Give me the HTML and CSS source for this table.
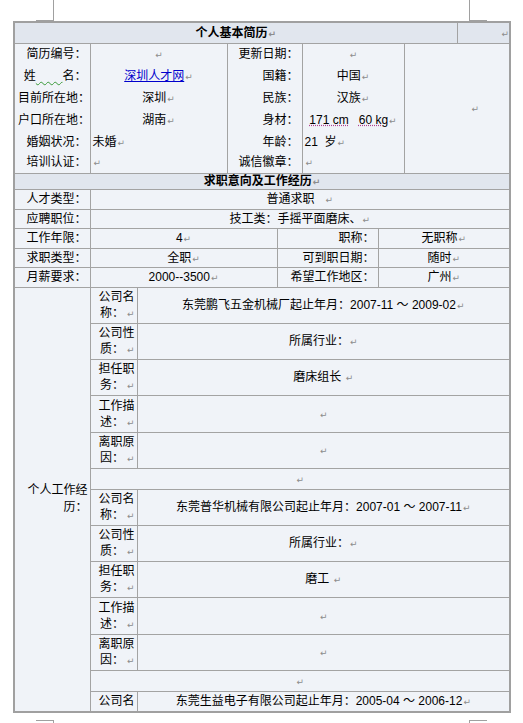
FILE: index.html
```html
<!DOCTYPE html>
<html lang="zh-CN">
<head>
<meta charset="utf-8">
<title>个人基本简历</title>
<link rel="stylesheet" href="styles.css">
</head>
<body>
<div class="page">
  <div class="marks top"><span class="mk mk-l"></span><span class="mk mk-r"></span></div>
  <table class="resume">
    <colgroup>
      <col class="c1"><col class="c2"><col class="c3"><col class="c4"><col class="c5"><col class="c6"><col class="c7"><col class="c8"><col class="c9">
    </colgroup>
    <tr class="hd1">
      <td colspan="8" class="title">个人基本简历<i class="p">↵</i></td>
      <td class="title-side"><i class="p">↵</i></td>
    </tr>
    <tr class="info i1">
      <td class="lb">简历编号：</td>
      <td colspan="2" class="ctr"><i class="p">↵</i></td>
      <td colspan="2" class="lb">更新日期：</td>
      <td colspan="2" class="ctr"><i class="p">↵</i></td>
      <td colspan="2" rowspan="6" class="photo"><i class="p">↵</i></td>
    </tr>
    <tr class="info i2">
      <td class="lb">姓<span class="wavy">&nbsp;&nbsp;&nbsp;&nbsp;&nbsp;&nbsp;&nbsp;&nbsp;</span>名：</td>
      <td colspan="2" class="ctr"><a class="link" href="#">深圳人才网</a><i class="p">↵</i></td>
      <td colspan="2" class="lb">国籍：</td>
      <td colspan="2" class="ctr">中国<i class="p">↵</i></td>
    </tr>
    <tr class="info i3">
      <td class="lb">目前所在地：</td>
      <td colspan="2" class="ctr">深圳<i class="p">↵</i></td>
      <td colspan="2" class="lb">民族：</td>
      <td colspan="2" class="ctr">汉族<i class="p">↵</i></td>
    </tr>
    <tr class="info i4">
      <td class="lb">户口所在地：</td>
      <td colspan="2" class="ctr">湖南<i class="p">↵</i></td>
      <td colspan="2" class="lb">身材：</td>
      <td colspan="2" class="ctr"><span class="dot">171 cm</span>&nbsp;&nbsp; <span class="dot">60 kg</span><i class="p">↵</i></td>
    </tr>
    <tr class="info i5">
      <td class="lb">婚姻状况：</td>
      <td colspan="2" class="lft">未婚<i class="p">↵</i></td>
      <td colspan="2" class="lb">年龄：</td>
      <td colspan="2" class="lft">21&nbsp; 岁<i class="p">↵</i></td>
    </tr>
    <tr class="info i6">
      <td class="lb">培训认证：</td>
      <td colspan="2" class="lft"><i class="p">↵</i></td>
      <td colspan="2" class="lb">诚信徽章：</td>
      <td colspan="2" class="lft"><i class="p">↵</i></td>
    </tr>
    <tr class="hd2">
      <td colspan="9" class="title">求职意向及工作经历<i class="p">↵</i></td>
    </tr>
    <tr class="r2 ra">
      <td class="lb">人才类型：</td>
      <td colspan="8" class="ctr">普通求职&nbsp;&nbsp;&nbsp;<i class="p">↵</i></td>
    </tr>
    <tr class="r2 rb">
      <td class="lb">应聘职位：</td>
      <td colspan="8" class="ctr">技工类：手摇平面磨床、<i class="p">↵</i></td>
    </tr>
    <tr class="r2 ra">
      <td class="lb">工作年限：</td>
      <td colspan="3" class="ctr">4<i class="p">↵</i></td>
      <td colspan="2" class="lb">职称：</td>
      <td colspan="3" class="ctr">无职称<i class="p">↵</i></td>
    </tr>
    <tr class="r2 rb">
      <td class="lb">求职类型：</td>
      <td colspan="3" class="ctr">全职<i class="p">↵</i></td>
      <td colspan="2" class="lb">可到职日期：</td>
      <td colspan="3" class="ctr">随时<i class="p">↵</i></td>
    </tr>
    <tr class="r2 ra">
      <td class="lb">月薪要求：</td>
      <td colspan="3" class="ctr">2000--3500<i class="p">↵</i></td>
      <td colspan="2" class="lb">希望工作地区：</td>
      <td colspan="3" class="ctr">广州<i class="p">↵</i></td>
    </tr>

    <tr class="w2">
      <td rowspan="13" class="lbw"><span class="ln">个人工作经</span><span class="ln">历：</span></td>
      <td class="sub"><span class="ln">公司名</span><span class="ln">称：<i class="p">↵</i></span></td>
      <td colspan="7" class="ctr">东莞鹏飞五金机械厂起止年月：2007-11 ～ 2009-02<i class="p">↵</i></td>
    </tr>
    <tr class="w2">
      <td class="sub"><span class="ln">公司性</span><span class="ln">质：<i class="p">↵</i></span></td>
      <td colspan="7" class="ctr">所属行业：<i class="p">↵</i></td>
    </tr>
    <tr class="w2">
      <td class="sub"><span class="ln">担任职</span><span class="ln">务：<i class="p">↵</i></span></td>
      <td colspan="7" class="ctr">磨床组长 <i class="p">↵</i></td>
    </tr>
    <tr class="w2 wt">
      <td class="sub"><span class="ln">工作描</span><span class="ln">述：<i class="p">↵</i></span></td>
      <td colspan="7" class="ctr"><i class="p">↵</i></td>
    </tr>
    <tr class="w2">
      <td class="sub"><span class="ln">离职原</span><span class="ln">因：<i class="p">↵</i></span></td>
      <td colspan="7" class="ctr"><i class="p">↵</i></td>
    </tr>
    <tr class="blank">
      <td colspan="8" class="ctr"><i class="p">↵</i></td>
    </tr>

    <tr class="w2">
      <td class="sub"><span class="ln">公司名</span><span class="ln">称：<i class="p">↵</i></span></td>
      <td colspan="7" class="ctr">东莞普华机械有限公司起止年月：2007-01 ～ 2007-11<i class="p">↵</i></td>
    </tr>
    <tr class="w2">
      <td class="sub"><span class="ln">公司性</span><span class="ln">质：<i class="p">↵</i></span></td>
      <td colspan="7" class="ctr">所属行业：<i class="p">↵</i></td>
    </tr>
    <tr class="w2">
      <td class="sub"><span class="ln">担任职</span><span class="ln">务：<i class="p">↵</i></span></td>
      <td colspan="7" class="ctr">磨工 <i class="p">↵</i></td>
    </tr>
    <tr class="w2 wt">
      <td class="sub"><span class="ln">工作描</span><span class="ln">述：<i class="p">↵</i></span></td>
      <td colspan="7" class="ctr"><i class="p">↵</i></td>
    </tr>
    <tr class="w2">
      <td class="sub"><span class="ln">离职原</span><span class="ln">因：<i class="p">↵</i></span></td>
      <td colspan="7" class="ctr"><i class="p">↵</i></td>
    </tr>
    <tr class="blank">
      <td colspan="8" class="ctr"><i class="p">↵</i></td>
    </tr>
    <tr class="last">
      <td class="sub">公司名</td>
      <td colspan="7" class="ctr">东莞生益电子有限公司起止年月：2005-04 ～ 2006-12<i class="p">↵</i></td>
    </tr>
  </table>
  <div class="marks bottom"><span class="mk mk-l"></span><span class="mk mk-r"></span></div>
</div>
</body>
</html>
```

FILE: styles.css
```css
* { box-sizing: border-box; }

body {
  margin: 0;
  background: #ffffff;
  color: #000000;
  font-family: "Liberation Sans", "Noto Sans CJK SC", sans-serif;
  font-size: 12px;
  line-height: 14px;
}

.page {
  width: 523px;
  height: 723px;
  overflow: hidden;
}

/* page corner marks */
.marks {
  display: flex;
  height: 21px;
}
.mk {
  display: block;
  height: 21px;
  border: 0 solid #a0a0a0;
}
.top .mk-l { margin-left: 36px; width: 18px; border-right-width: 1px; border-bottom-width: 1px; }
.top .mk-r { margin-left: 415px; width: 18px; border-left-width: 1px; border-bottom-width: 1px; }
.bottom { margin-top: 7px; }
.bottom .mk-l { margin-left: 36px; width: 18px; border-right-width: 1px; border-top-width: 1px; }
.bottom .mk-r { margin-left: 415px; width: 18px; border-left-width: 1px; border-top-width: 1px; }

/* table */
.resume {
  margin-left: 13px;
  width: 496px;
  table-layout: fixed;
  border-collapse: collapse;
  border: 2px solid #a0a0a0;
  background: #f0f3f8;
}
.c1 { width: 76px; }
.c2 { width: 47px; }
.c3 { width: 90px; }
.c4 { width: 50px; }
.c5 { width: 25px; }
.c6 { width: 76px; }
.c7 { width: 26px; }
.c8 { width: 53px; }
.c9 { width: 53px; }

.resume td {
  border: 1px solid #a3a3a3;
  padding: 0 3px;
  vertical-align: middle;
  white-space: nowrap;
}

.p {
  font-style: normal;
  font-family: "DejaVu Sans", sans-serif;
  font-size: 9px;
  line-height: 9px;
  color: #8c8c8c;
  margin-left: 1px;
}

.resume td.title {
  text-align: center;
  font-weight: bold;
  background: #e1e6ee;
}
.resume td.title-side {
  background: #e1e6ee;
  text-align: right;
  padding-right: 0;
}
.hd1 td { height: 21px; }
.hd2 td { height: 16px; line-height: 13px; }

.lb { text-align: right; }
.ctr { text-align: center; }
.resume td.lft { text-align: left; padding-left: 2px; }

/* info block: no horizontal rules between rows */
.info td { border-top: 0; border-bottom: 0; }
.resume .info td.photo { border-bottom: 1px solid #a3a3a3; text-align: left; padding-left: 66px; }
.i1 td, .i2 td, .i3 td, .i4 td { height: 22px; }
.i5 td, .i6 td { height: 21px; }

.wavy {
  text-decoration: underline wavy #3a9a3a;
  text-decoration-thickness: 1px;
}
.link { color: #0000cc; text-decoration: underline; }
.dot {
  text-decoration: underline dotted #b04090;
}

.r2 td { height: 20px; }
.r2.rb td { height: 19px; }

/* wrapped label cells: each visual line is its own block */
.ln { display: block; white-space: nowrap; }

.resume td.lbw {
  text-align: right;
  padding: 0 2px 0 6px;
  line-height: 17px;
}
.resume td.sub {
  text-align: right;
  padding: 1px 2px 1px 2px;
  line-height: 16px;
}
.resume td.sub .p { margin-left: 3px; }
.w2 td { height: 36px; }
.w2.wt td { height: 37px; }
.blank td { height: 21px; }
.last td { height: 21px; }
```
